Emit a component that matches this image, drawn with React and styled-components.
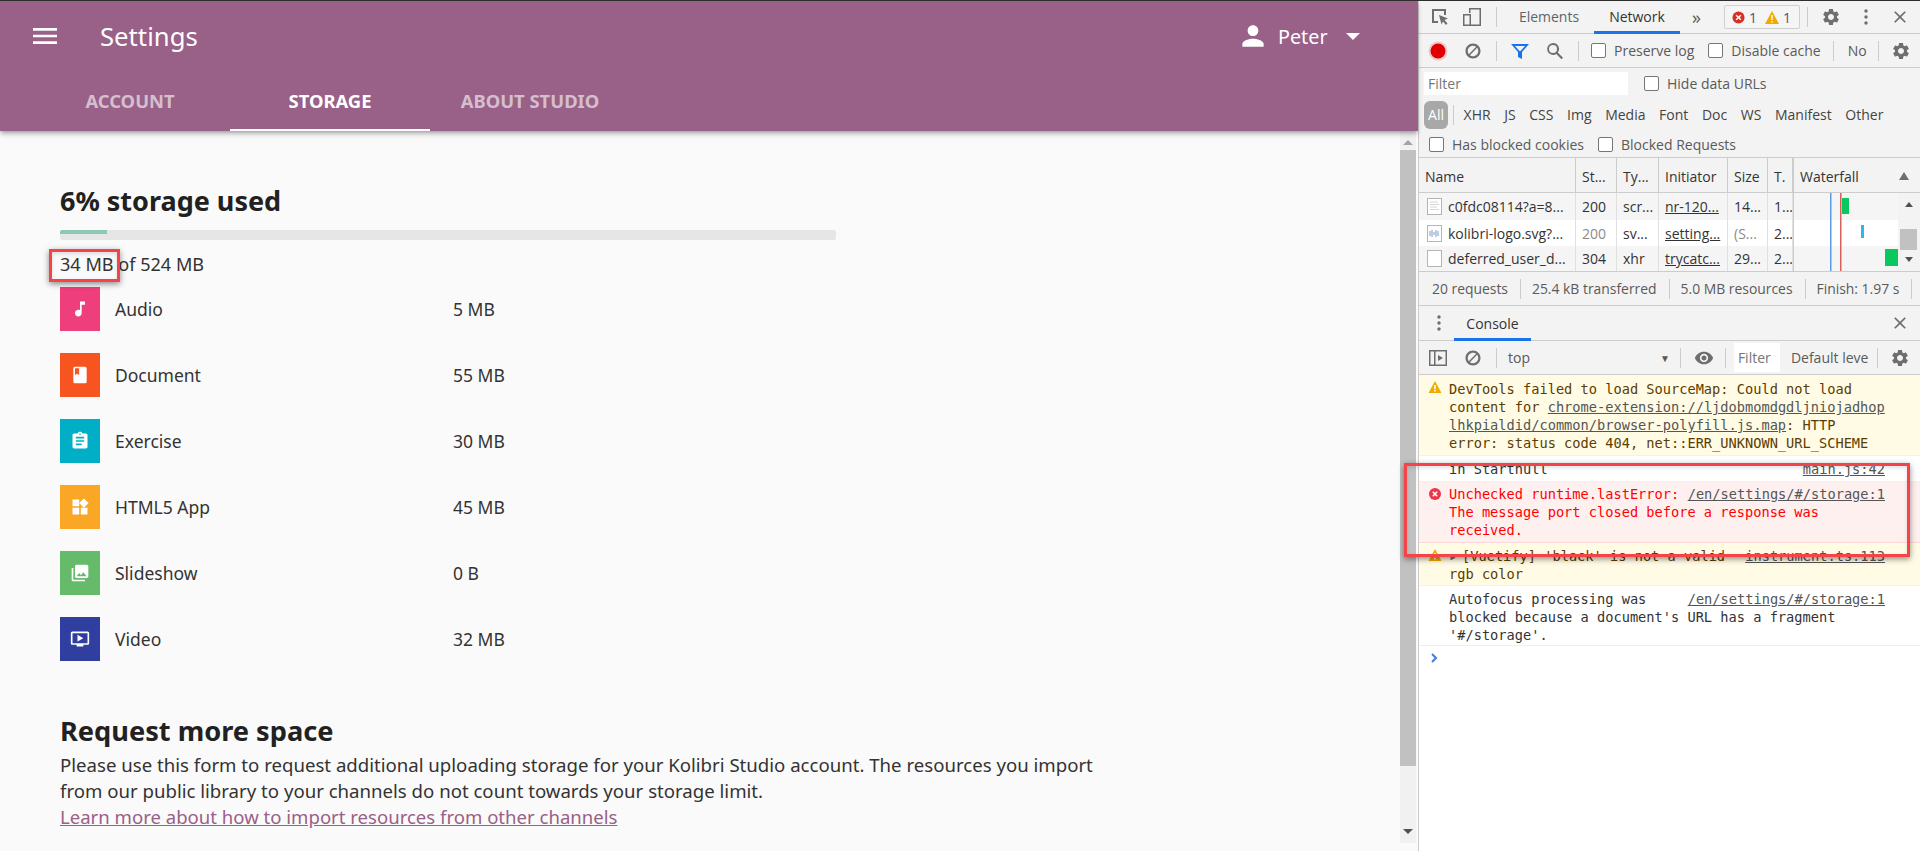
import React from 'react'
import styled, { createGlobalStyle } from 'styled-components'

const uiFont = `"Open Sans", "Noto Sans", sans-serif`
const monoFont = `"DejaVu Sans Mono", monospace`

const kinds = [
    { name: 'Audio', size: '5 MB', color: '#ee3e7b', path: 'M12 3v10.55c-.59-.34-1.27-.55-2-.55-2.21 0-4 1.79-4 4s1.79 4 4 4 4-1.79 4-4V7h4V3h-6z' },
    { name: 'Document', size: '55 MB', color: '#f8541f', path: 'M18 2H6c-1.1 0-2 .9-2 2v16c0 1.1.9 2 2 2h12c1.1 0 2-.9 2-2V4c0-1.1-.9-2-2-2zM6 4h5v8l-2.5-1.5L6 12V4z' },
    { name: 'Exercise', size: '30 MB', color: '#00afc6', path: 'M19 3h-4.18C14.4 1.84 13.3 1 12 1c-1.3 0-2.4.84-2.82 2H5c-1.1 0-2 .9-2 2v14c0 1.1.9 2 2 2h14c1.1 0 2-.9 2-2V5c0-1.1-.9-2-2-2zm-7 0c.55 0 1 .45 1 1s-.45 1-1 1-1-.45-1-1 .45-1 1-1zm2 14H7v-2h7v2zm3-4H7v-2h10v2zm0-4H7V7h10v2z' },
    { name: 'HTML5 App', size: '45 MB', color: '#fba726', path: 'M13 13v8h8v-8h-8zM3 21h8v-8H3v8zM3 3v8h8V3H3zm13.66-1.31L11 7.34 16.66 13l5.66-5.66-5.66-5.65z' },
    { name: 'Slideshow', size: '0 B', color: '#66bb6a', path: 'M22 16V4c0-1.1-.9-2-2-2H8c-1.1 0-2 .9-2 2v12c0 1.1.9 2 2 2h12c1.1 0 2-.9 2-2zm-11-4l2.03 2.71L16 11l4 5H8l3-4zM2 6v14c0 1.1.9 2 2 2h14v-2H4V6H2z' },
    { name: 'Video', size: '32 MB', color: '#303f9f', path: 'M21 3H3c-1.1 0-2 .9-2 2v12c0 1.1.9 2 2 2h5v2h8v-2h5c1.1 0 1.99-.9 1.99-2L23 5c0-1.1-.9-2-2-2zm0 14H3V5h18v12zm-5-6l-7 4V7z' },
]

const filters = ['XHR', 'JS', 'CSS', 'Img', 'Media', 'Font', 'Doc', 'WS', 'Manifest', 'Other']

const requests = [
    { name: 'c0fdc08114?a=8...', status: '200', type: 'scr...', init: 'nr-120...', size: '14...', time: '1...', icon: 'script' },
    { name: 'kolibri-logo.svg?...', status: '200', type: 'sv...', init: 'setting...', size: '(S...', time: '2...', icon: 'logo', light: true, white: true },
    { name: 'deferred_user_d...', status: '304', type: 'xhr', init: 'trycatc...', size: '29...', time: '2...', icon: 'blank' },
]

const GlobalStyle = createGlobalStyle`
    html, body {
        margin: 0;
        height: 851px;
        overflow: hidden;
        background: #fff;
    }
    * { box-sizing: border-box; }
`

const Shell = styled.div`
    display: flex;
    height: 851px;
    border-top: 1px solid #2e2e2e;
`

const Main = styled.div`
    width: 1418px;
    height: 850px;
    display: flex;
    flex-direction: column;
    position: relative;
    background: #fafafa;
    font-family: "Noto Sans", sans-serif;
    color: #212121;
`

const Header = styled.header`
    height: 130px;
    flex: none;
    background: #996088;
    color: #fff;
    box-shadow: 0 2px 4px -1px rgba(0,0,0,.3), 0 4px 5px rgba(0,0,0,.14);
    position: relative;
    z-index: 2;
`

const TopRow = styled.div`
    height: 70px;
    display: flex;
    align-items: center;
    padding: 0 58px 0 29px;
`

const HeaderIcon = styled.svg`
    width: 32px;
    height: 32px;
    fill: #fff;
    flex: none;
`

const AppTitle = styled.div`
    margin-left: 39px;
    font-size: 25.700px;
    flex: 1;
`

const UserName = styled.div`
    margin-left: 9px;
    font-size: 19.800px;
    width: 68px;
`

const Caret = styled.div`
    border-left: 7px solid transparent;
    border-right: 7px solid transparent;
    border-top: 7px solid #fff;
`

const Tabs = styled.div`
    display: flex;
    padding-left: 30px;
`

const Tab = styled.div`
    width: 200px;
    height: 60px;
    padding-top: 1px;
    display: flex;
    align-items: center;
    justify-content: center;
    font-size: 18.400px;
    font-weight: 700;
    color: ${p => p.$active ? '#fff' : 'rgba(255,255,255,.6)'};
    border-bottom: 2px solid ${p => p.$active ? '#fff' : 'transparent'};
`

const Body = styled.div`
    flex: 1;
    display: flex;
    min-height: 0;
`

const Content = styled.main`
    flex: 1;
    padding: 54px 0 0 60px;
`

const StorageTitle = styled.h2`
    margin: 0;
    font-size: 27px;
    line-height: 32px;
    font-weight: 700;
`

const Progress = styled.div`
    width: 776px;
    height: 10px;
    margin-top: 13px;
    background: #e6e6e6;
    border-radius: 2px;
`

const ProgressFill = styled.div`
    height: 4px;
    background: #8cc9b3;
    border-radius: 2px 0 0 0;
`

const Usage = styled.div`
    margin: 12px 0 11px;
    font-size: 18.100px;
    line-height: 24px;
    color: #333;
`

const UsedAmount = styled.span`
    position: relative;
`

const Highlight = styled.div`
    position: absolute;
    border: 3px solid #f4444a;
    box-shadow: 0 2px 6px rgba(0,0,0,.45), inset 0 2px 4px rgba(0,0,0,.12);
    pointer-events: none;
    z-index: 5;
`

const UsedHighlight = styled(Highlight)`
    left: -11px;
    top: -3px;
    width: 71px;
    height: 33px;
`

const ConsoleHighlight = styled(Highlight)`
    left: -15px;
    top: 462px;
    width: 506px;
    height: 94px;
`

const KindList = styled.div`
    display: flex;
    flex-direction: column;
    gap: 22px;
`

const KindRow = styled.div`
    display: flex;
    align-items: center;
    font-size: 17.500px;
    color: #333;
`

const KindIcon = styled.div`
    width: 40px;
    height: 44px;
    display: flex;
    align-items: center;
    justify-content: center;
    background: ${p => p.$color};
    svg { width: 20px; height: 20px; fill: #fff; }
`

const KindName = styled.div`
    margin-left: 15px;
    width: 338px;
`

const RequestTitle = styled.h2`
    margin: 54px 0 5px;
    font-size: 27.200px;
    line-height: 32px;
    font-weight: 700;
`

const RequestText = styled.p`
    margin: 0;
    width: 1060px;
    font-size: 18.630px;
    line-height: 26px;
    color: #333;
`

const LearnLink = styled.a`
    display: block;
    font-size: 18.570px;
    line-height: 26px;
    color: #996088;
    text-decoration: underline;
`

const PageScrollbar = styled.div`
    width: 16px;
    flex: none;
    height: 712px;
    margin-right: 2px;
    background: #f1f1f1;
    display: flex;
    flex-direction: column;
    align-items: center;
    justify-content: space-between;
`

const ScrollArrow = styled.div`
    width: 0;
    height: 0;
    border-left: 5px solid transparent;
    border-right: 5px solid transparent;
    ${p => p.$down
        ? 'border-top: 5px solid #505050; margin-bottom: 9px;'
        : 'border-bottom: 5px solid #a3a3a3; margin-top: 9px;'}
`

const PageThumb = styled.div`
    width: 16px;
    height: 616px;
    margin: 5px 0 auto;
    background: #c1c1c1;
`

const DevTools = styled.aside`
    width: 502px;
    height: 850px;
    flex: none;
    display: flex;
    flex-direction: column;
    position: relative;
    border-left: 1px solid #ccc;
    background: #fff;
    font-family: ${uiFont};
    font-size: 14px;
    color: #5a5a5a;
`

const Toolbar = styled.div`
    height: ${p => p.$h}px;
    flex: none;
    display: flex;
    align-items: center;
    background: #f3f3f3;
    border-bottom: ${p => p.$plain ? 'none' : '1px solid #ccc'};
    padding-left: ${p => p.$pad || 0}px;
    position: relative;
`

const ToolIcon = styled.svg`
    width: ${p => p.$size || 20}px;
    height: ${p => p.$size || 20}px;
    margin-left: ${p => p.$left || 0}px;
    flex: none;
    fill: ${p => p.$fill || '#6e6e6e'};
`

const Sep = styled.div`
    width: 1px;
    height: ${p => p.$h || 20}px;
    margin-left: ${p => p.$left || 0}px;
    flex: none;
    background: #ccc;
`

const PanelTab = styled.div`
    align-self: stretch;
    display: flex;
    align-items: center;
    justify-content: center;
    width: ${p => p.$width}px;
    margin-left: ${p => p.$left || 0}px;
    flex: none;
    color: ${p => p.$active ? '#333' : '#5f6368'};
    border-bottom: 3px solid ${p => p.$active ? '#1a73e8' : 'transparent'};
    margin-bottom: -1px;
`

const IssueBadge = styled.div`
    width: 76px;
    height: 24px;
    margin-left: ${p => p.$left || 0}px;
    display: flex;
    align-items: center;
    padding-left: 7px;
    gap: 4px;
    flex: none;
    border: 1px solid #d0d0d0;
    border-radius: 2px;
    background: #f5f5f5;
    color: #555;
`

const ToolText = styled.span`
    margin-left: ${p => p.$left || 0}px;
    flex: none;
    white-space: nowrap;
    font-size: ${p => p.$fs ? `${p.$fs}px` : 'inherit'};
`

const CheckBox = styled.span`
    width: 15px;
    height: 15px;
    margin-left: ${p => p.$left || 0}px;
    flex: none;
    border: 1px solid #767676;
    border-radius: 2px;
    background: #fff;
`

const CheckLabel = styled.span`
    margin-left: 8px;
    flex: none;
    white-space: nowrap;
`

const FilterInput = styled.div`
    width: ${p => p.$width}px;
    height: ${p => p.$h || 23}px;
    line-height: ${p => p.$h || 23}px;
    margin-left: ${p => p.$left || 0}px;
    flex: none;
    background: #fff;
    color: #757575;
    padding-left: 4px;
`

const TypeRow = styled.div`
    height: 33px;
    flex: none;
    display: flex;
    align-items: center;
    background: #f3f3f3;
    padding-left: 5px;
`

const AllPill = styled.span`
    width: 24px;
    height: 28px;
    display: flex;
    align-items: center;
    justify-content: center;
    border-radius: 6px;
    background: #a8a8a8;
    color: #fff;
`

const TypeName = styled.span`
    margin-left: 13.600px;
    color: #444;
    ${Sep} + & { margin-left: 9.600px; }
`

const NetTable = styled.div`
    height: 114px;
    flex: none;
    display: flex;
    background: #f3f3f3;
    border-bottom: 1px solid #ccc;
`

const NetGrid = styled.div`
    width: 374px;
    flex: none;
    display: grid;
    grid-template-columns: 157px 41px 42px 69px 40px 25px;
    grid-template-rows: 35px 27px 26px 25px;
    color: #333;
`

const HeadCell = styled.div`
    display: flex;
    align-items: center;
    padding: 2px 0 0 6px;
    background: #f3f3f3;
    border-right: 1px solid #ccc;
    border-bottom: 1px solid #ccc;
    white-space: nowrap;
    overflow: hidden;
`

const NetCell = styled.div`
    display: flex;
    align-items: center;
    gap: 6px;
    padding-left: ${p => p.$wide ? 8 : 6}px;
    background: ${p => p.$white ? '#fff' : '#f5f5f5'};
    border-right: 1px solid #e0e0e0;
    color: ${p => p.$light ? '#8c8c8c' : '#333'};
    text-decoration: ${p => p.$link ? 'underline' : 'none'};
    white-space: nowrap;
    overflow: hidden;
`

const Waterfall = styled.div`
    flex: 1;
    display: flex;
    flex-direction: column;
    border-left: 1px solid #ccc;
`

const WaterfallHead = styled.div`
    height: 35px;
    flex: none;
    display: flex;
    align-items: center;
    justify-content: space-between;
    padding: 2px 11px 0 6px;
    color: #333;
    border-bottom: 1px solid #ccc;
`

const SortArrow = styled.div`
    border-left: 5px solid transparent;
    border-right: 5px solid transparent;
    border-bottom: 8px solid #6e6e6e;
`

const WaterfallBody = styled.div`
    flex: 1;
    display: flex;
`

const NetScrollbar = styled.div`
    width: 21px;
    flex: none;
    background: #f3f3f3;
    display: flex;
    flex-direction: column;
    align-items: center;
    justify-content: space-between;
    padding: 9px 0 9px;
`

const NetThumb = styled.div`
    width: 17px;
    height: 21px;
    margin-top: 14px;
    background: #c1c1c1;
`

const NetArrow = styled.div`
    border-left: 4px solid transparent;
    border-right: 4px solid transparent;
    ${p => p.$down ? 'border-top: 5px solid #505050;' : 'border-bottom: 5px solid #505050;'}
`

const StatusBar = styled.div`
    height: 34px;
    flex: none;
    display: flex;
    align-items: center;
    padding-left: 13px;
    font-size: 13.900px;
    background: #f3f3f3;
    border-bottom: 1px solid #ccc;
`

const StatusItem = styled.span`
    padding-right: 12px;
    margin-right: 11px;
    border-right: 1px solid #ccc;
    white-space: nowrap;
    line-height: 20px;
`

const ConsoleTabText = styled.div`
    align-self: stretch;
    width: 77px;
    margin-left: 5px;
    margin-bottom: -1px;
    padding-top: 3px;
    display: flex;
    align-items: center;
    justify-content: center;
    color: #333;
    border-bottom: 3px solid #1a73e8;
`

const CloseIcon = styled(ToolIcon)`
    position: absolute;
    right: 10px;
    top: 50%;
    margin-top: -10px;
`

const ConsoleList = styled.div`
    flex: 1;
    font-family: ${monoFont};
    font-size: 13.670px;
    line-height: 18px;
    background: #fff;
`

const Message = styled.div`
    position: relative;
    padding: ${p => p.$top}px 35px ${p => p.$bottom}px 30px;
    color: ${p => ({ warn: '#5c3c00', error: '#f00' }[p.$kind] || '#333')};
    background: ${p => ({ warn: '#fffbe5', error: '#fff0f0' }[p.$kind] || '#fff')};
    border-bottom: 1px solid ${p => ({ warn: '#fff5c2', error: '#ffd6d6' }[p.$kind] || '#f0f0f0')};
`

const Line = styled.div`
    white-space: pre;
    height: 18px;
`

const MessageIcon = styled.svg`
    position: absolute;
    left: 9px;
    top: 5px;
    width: 14px;
    height: 14px;
`

const Source = styled.a`
    float: right;
    color: #555;
    text-decoration: underline;
`

const MsgLink = styled.span`
    color: #555;
    text-decoration: underline;
`

const Expander = styled.span`
    display: inline-block;
    width: 13px;
    color: #777;
    font-size: 13px;
`

const Prompt = styled.svg`
    display: block;
    width: 10px;
    height: 10px;
    margin: 7px 0 0 11px;
    fill: none;
    stroke: #367cf1;
    stroke-width: 2;
`

const GEAR = 'M19.14 12.94c.04-.3.06-.61.06-.94s-.02-.64-.07-.94l2.03-1.58c.18-.14.23-.41.12-.61l-1.92-3.32c-.12-.22-.37-.29-.59-.22l-2.39.96c-.5-.38-1.03-.7-1.62-.94l-.36-2.54c-.04-.24-.24-.41-.48-.41h-3.84c-.24 0-.43.17-.47.41l-.36 2.54c-.59.24-1.13.57-1.62.94l-2.39-.96c-.22-.08-.47 0-.59.22L2.74 8.87c-.12.21-.08.47.12.61l2.03 1.58c-.05.3-.09.63-.09.94s.02.64.07.94l-2.03 1.58c-.18.14-.23.41-.12.61l1.92 3.32c.12.22.37.29.59.22l2.39-.96c.5.38 1.03.7 1.62.94l.36 2.54c.05.24.24.41.48.41h3.84c.24 0 .44-.17.47-.41l.36-2.54c.59-.24 1.13-.56 1.62-.94l2.39.96c.22.08.47 0 .59-.22l1.92-3.32c.12-.22.07-.47-.12-.61l-2.01-1.58zM12 15.6c-1.98 0-3.6-1.62-3.6-3.6s1.62-3.6 3.6-3.6 3.6 1.62 3.6 3.6-1.62 3.6-3.6 3.6z'
const CLOSE = 'M19 6.41L17.59 5 12 10.59 6.41 5 5 6.41 10.59 12 5 17.59 6.41 19 12 13.41 17.59 19 19 17.59 13.41 12z'
const BLOCK = 'M12 2C6.48 2 2 6.48 2 12s4.48 10 10 10 10-4.48 10-10S17.52 2 12 2zM5 12c0-3.87 3.13-7 7-7 1.570 0 3 .52 4.170 1.400L6.400 16.170A6.950 6.950 0 0 1 5 12zm7 7c-1.570 0-3-.52-4.170-1.400L17.600 7.830A6.950 6.950 0 0 1 19 12c0 3.870-3.130 7-7 7z'

function Icon({ d, size, left, fill }) {
    return <ToolIcon viewBox="0 0 24 24" $size={size} $left={left} $fill={fill}><path d={d} /></ToolIcon>
}

function Dots({ left }) {
    return (
        <ToolIcon viewBox="0 0 20 20" $left={left}>
            <circle cx="10" cy="4" r="1.700" />
            <circle cx="10" cy="10" r="1.700" />
            <circle cx="10" cy="16" r="1.700" />
        </ToolIcon>
    )
}

function WarnGlyph() {
    return <MessageIcon viewBox="0 0 14 14"><path d="M7 1 13.5 13H.5z" fill="#f0ab00" /><path d="M6.2 5h1.6v4.2H6.2zM6.2 10h1.6v1.6H6.2z" fill="#fff" /></MessageIcon>
}

function FileGlyph({ kind }) {
    return (
        <svg width="15" height="17" viewBox="0 0 15 17" style={{ flex: 'none' }}>
            <rect x=".5" y=".5" width="14" height="16" fill="#fff" stroke="#b5b5b5" />
            {kind === 'script' && <path d="M3 4h8M3 6.5h9M3 9h7M3 11.500h9" stroke="#d5d5d5" />}
            {kind === 'logo' && <path d="M3 6v5M5 5v7M7 7v3M9 5v7M11 6v5" stroke="#7a9cc6" />}
        </svg>
    )
}

function App() {
    return (
        <>
            <GlobalStyle />
            <Shell>
                <Main>
                    <Header>
                        <TopRow>
                            <HeaderIcon viewBox="0 0 24 24"><path d="M3 18h18v-2H3v2zm0-5h18v-2H3v2zm0-7v2h18V6H3z" /></HeaderIcon>
                            <AppTitle>Settings</AppTitle>
                            <HeaderIcon viewBox="0 0 24 24"><path d="M12 12c2.21 0 4-1.79 4-4s-1.79-4-4-4-4 1.790-4 4 1.790 4 4 4zm0 2c-2.670 0-8 1.340-8 4v2h16v-2c0-2.660-5.330-4-8-4z" /></HeaderIcon>
                            <UserName>Peter</UserName>
                            <Caret />
                        </TopRow>
                        <Tabs>
                            <Tab>ACCOUNT</Tab>
                            <Tab $active>STORAGE</Tab>
                            <Tab>ABOUT STUDIO</Tab>
                        </Tabs>
                    </Header>
                    <Body>
                        <Content>
                            <StorageTitle>6% storage used</StorageTitle>
                            <Progress>
                                <ProgressFill style={{ width: '6%' }} />
                            </Progress>
                            <Usage>
                                <UsedAmount>34 MB<UsedHighlight /></UsedAmount> of 524 MB
                            </Usage>
                            <KindList>
                                {kinds.map((kind) => (
                                    <KindRow key={kind.name}>
                                        <KindIcon $color={kind.color}>
                                            <svg viewBox="0 0 24 24"><path d={kind.path} /></svg>
                                        </KindIcon>
                                        <KindName>{kind.name}</KindName>
                                        <span>{kind.size}</span>
                                    </KindRow>
                                ))}
                            </KindList>
                            <RequestTitle>Request more space</RequestTitle>
                            <RequestText>
                                Please use this form to request additional uploading storage for your Kolibri Studio account. The resources you import from our public library to your channels do not count towards your storage limit.
                            </RequestText>
                            <LearnLink>Learn more about how to import resources from other channels</LearnLink>
                        </Content>
                        <PageScrollbar>
                            <ScrollArrow />
                            <PageThumb />
                            <ScrollArrow $down />
                        </PageScrollbar>
                    </Body>
                </Main>
                <DevTools>
                    <Toolbar $h={33}>
                        <ToolIcon viewBox="0 0 20 20" $left={11}>
                            <path d="M2 2h14v6h-2V4H4v10h4v2H2z" />
                            <path d="M9 8l9 3.500-3.500 1.500 3 3.500-1.500 1.500-3-3.500-1.500 3z" />
                        </ToolIcon>
                        <ToolIcon viewBox="0 0 20 20" $left={12}>
                            <path d="M7 1h12v18H8v-1.500h9.500v-15h-9V6H7z" />
                            <path d="M1 7h8v12H1zm1.500 1.500v9h5v-9z" />
                        </ToolIcon>
                        <Sep $left={14} />
                        <PanelTab $width={88} $left={8}>Elements</PanelTab>
                        <PanelTab $width={86} $left={1} $active>Network</PanelTab>
                        <ToolText $left={12} $fs={18}>»</ToolText>
                        <IssueBadge $left={23}>
                            <svg width="13" height="13" viewBox="0 0 14 14"><circle cx="7" cy="7" r="6.500" fill="#d93025" /><path d="M4.500 4.500l5 5m0-5l-5 5" stroke="#fff" strokeWidth="1.500" /></svg>
                            <span>1</span>
                            <svg width="14" height="13" viewBox="0 0 14 13" style={{ marginLeft: 4 }}><path d="M7 0 14 13H0z" fill="#f0ab00" /><path d="M6.300 4h1.400v5H6.300zM6.300 10h1.400v1.500H6.300z" fill="#fff" /></svg>
                            <span>1</span>
                        </IssueBadge>
                        <Sep $left={7} />
                        <Icon d={GEAR} left={13} />
                        <Dots left={15} />
                        <CloseIcon viewBox="0 0 24 24"><path d={CLOSE} /></CloseIcon>
                    </Toolbar>
                    <Toolbar $h={34}>
                        <ToolIcon viewBox="0 0 20 20" $left={9} $fill="#e00000">
                            <circle cx="10" cy="10" r="9.500" opacity=".18" />
                            <circle cx="10" cy="10" r="7.500" />
                        </ToolIcon>
                        <Icon d={BLOCK} left={16} size={18} />
                        <Sep $left={14} />
                        <ToolIcon viewBox="0 0 20 20" $left={13} $fill="#1a73e8"><path d="M1 3h18l-7 8v7l-4-2v-5zm4 2 4.500 5h1L15 5z" /></ToolIcon>
                        <ToolIcon viewBox="0 0 20 20" $left={15}><path d="M8 2a6 6 0 0 1 4.800 9.600l5.200 5.200-1.500 1.500-5.200-5.200A6 6 0 1 1 8 2zm0 2a4 4 0 1 0 0 8 4 4 0 0 0 0-8z" /></ToolIcon>
                        <Sep $left={13} />
                        <CheckBox $left={12} />
                        <CheckLabel>Preserve log</CheckLabel>
                        <CheckBox $left={14} />
                        <CheckLabel>Disable cache</CheckLabel>
                        <Sep $left={12} />
                        <ToolText $left={14}>No</ToolText>
                        <Sep $left={11} />
                        <Icon d={GEAR} left={12} />
                    </Toolbar>
                    <Toolbar $h={30} $plain>
                        <FilterInput $width={204} $left={5}>Filter</FilterInput>
                        <CheckBox $left={16} />
                        <CheckLabel>Hide data URLs</CheckLabel>
                    </Toolbar>
                    <TypeRow>
                        <AllPill>All</AllPill>
                        <Sep $h={20} $left={5} />
                        {filters.map((name) => <TypeName key={name}>{name}</TypeName>)}
                    </TypeRow>
                    <Toolbar $h={27} $pad={10}>
                        <CheckBox />
                        <CheckLabel>Has blocked cookies</CheckLabel>
                        <CheckBox $left={14} />
                        <CheckLabel>Blocked Requests</CheckLabel>
                    </Toolbar>
                    <NetTable>
                        <NetGrid>
                            {['Name', 'St...', 'Ty...', 'Initiator', 'Size', 'T.'].map((h) => <HeadCell key={h}>{h}</HeadCell>)}
                            {requests.map((r) => (
                                <React.Fragment key={r.name}>
                                    <NetCell $wide $white={r.white}><FileGlyph kind={r.icon} />{r.name}</NetCell>
                                    <NetCell $white={r.white} $light={r.light}>{r.status}</NetCell>
                                    <NetCell $white={r.white}>{r.type}</NetCell>
                                    <NetCell $white={r.white} $link>{r.init}</NetCell>
                                    <NetCell $white={r.white} $light={r.light}>{r.size}</NetCell>
                                    <NetCell $white={r.white}>{r.time}</NetCell>
                                </React.Fragment>
                            ))}
                        </NetGrid>
                        <Waterfall>
                            <WaterfallHead>Waterfall<SortArrow /></WaterfallHead>
                            <WaterfallBody>
                                <svg width="104" height="78" viewBox="0 0 104 78">
                                    <rect width="104" height="78" fill="#f5f5f5" />
                                    <rect y="27" width="104" height="26" fill="#fff" />
                                    <rect x="36" width="1.500" height="78" fill="#5a9be8" />
                                    <rect x="46" width="1.500" height="78" fill="#d9605a" />
                                    <rect x="48" y="5" width="7" height="16" fill="#0bc75f" />
                                    <rect x="67" y="32" width="3" height="13" fill="#26b7f5" />
                                    <rect x="91" y="56" width="13" height="17" fill="#0bc75f" />
                                </svg>
                                <NetScrollbar>
                                    <NetArrow />
                                    <NetThumb />
                                    <NetArrow $down />
                                </NetScrollbar>
                            </WaterfallBody>
                        </Waterfall>
                    </NetTable>
                    <StatusBar>
                        <StatusItem>20 requests</StatusItem>
                        <StatusItem>25.4 kB transferred</StatusItem>
                        <StatusItem>5.0 MB resources</StatusItem>
                        <StatusItem>Finish: 1.97 s</StatusItem>
                    </StatusBar>
                    <Toolbar $h={35}>
                        <Dots left={10} />
                        <ConsoleTabText>Console</ConsoleTabText>
                        <CloseIcon viewBox="0 0 24 24"><path d={CLOSE} /></CloseIcon>
                    </Toolbar>
                    <Toolbar $h={34}>
                        <ToolIcon viewBox="0 0 20 20" $left={9}><path d="M1 2h18v16H1zm1.500 1.500v13H6v-13zm5 0v13h10v-13z" /><path d="M10 7l5 3-5 3z" /></ToolIcon>
                        <Icon d={BLOCK} left={16} size={18} />
                        <Sep $left={14} />
                        <ToolText $left={11}>top</ToolText>
                        <ToolText $left={130} $fs={10}>▼</ToolText>
                        <Sep $left={10} />
                        <ToolIcon viewBox="0 0 24 24" $left={13}><path d="M12 4.500C7 4.500 2.730 7.610 1 12c1.730 4.390 6 7.500 11 7.500s9.270-3.110 11-7.500c-1.730-4.390-6-7.500-11-7.500zM12 17c-2.760 0-5-2.240-5-5s2.240-5 5-5 5 2.240 5 5-2.240 5-5 5zm0-8c-1.660 0-3 1.340-3 3s1.340 3 3 3 3-1.340 3-3-1.340-3-3-3z" /></ToolIcon>
                        <Sep $left={11} />
                        <FilterInput $width={46} $left={8} $h={29}>Filter</FilterInput>
                        <ToolText $left={11}>Default leve</ToolText>
                        <Sep $left={9} />
                        <Icon d={GEAR} left={12} />
                    </Toolbar>
                    <ConsoleList>
                        <Message $kind="warn" $top={5} $bottom={3}>
                            <WarnGlyph />
                            <Line>DevTools failed to load SourceMap: Could not load</Line>
                            <Line>content for <MsgLink>chrome-extension://ljdobmomdgdljniojadhop</MsgLink></Line>
                            <Line><MsgLink>lhkpialdid/common/browser-polyfill.js.map</MsgLink>: HTTP</Line>
                            <Line>error: status code 404, net::ERR_UNKNOWN_URL_SCHEME</Line>
                        </Message>
                        <Message $top={4} $bottom={3}>
                            <Source>main.js:42</Source>
                            <Line>in Startnull</Line>
                        </Message>
                        <Message $kind="error" $top={3} $bottom={3}>
                            <MessageIcon viewBox="0 0 14 14"><circle cx="7" cy="7" r="6" fill="#e8384a" /><path d="M4.800 4.800l4.400 4.400m0-4.400l-4.400 4.400" stroke="#fff" strokeWidth="1.500" /></MessageIcon>
                            <Source>/en/settings/#/storage:1</Source>
                            <Line>Unchecked runtime.lastError:</Line>
                            <Line>The message port closed before a response was</Line>
                            <Line>received.</Line>
                        </Message>
                        <Message $kind="warn" $top={4} $bottom={2}>
                            <WarnGlyph />
                            <Source>instrument.ts:113</Source>
                            <Line><Expander>▸</Expander>[Vuetify] 'black' is not a valid</Line>
                            <Line>rgb color</Line>
                        </Message>
                        <Message $top={4} $bottom={1}>
                            <Source>/en/settings/#/storage:1</Source>
                            <Line>Autofocus processing was</Line>
                            <Line>blocked because a document's URL has a fragment</Line>
                            <Line>'#/storage'.</Line>
                        </Message>
                        <Prompt viewBox="0 0 10 10"><path d="M2 1l4 4-4 4" /></Prompt>
                    </ConsoleList>
                    <ConsoleHighlight />
                </DevTools>
            </Shell>
        </>
    )
}

export default App
